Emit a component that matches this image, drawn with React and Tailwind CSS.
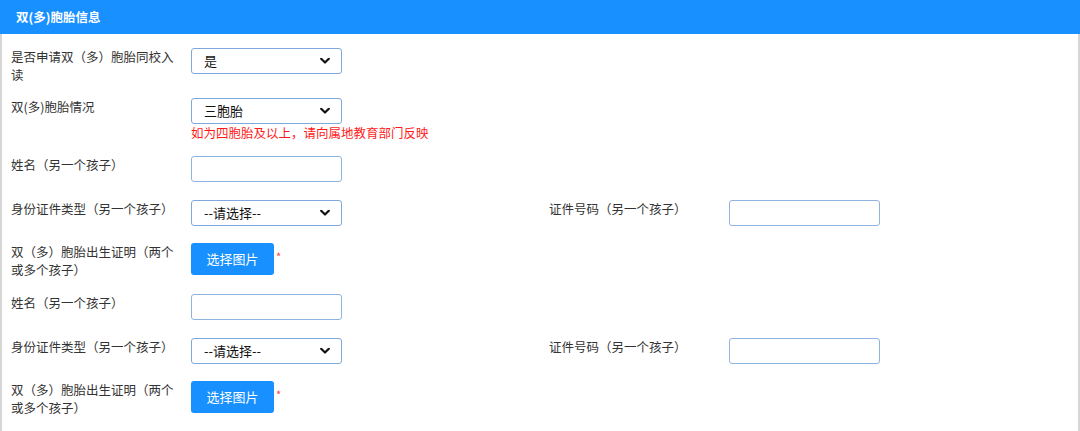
import React from "react";

const FONT = { fontFamily: '"Noto Sans CJK SC", "Noto Sans", sans-serif' };

function Chevron() {
  return (
    <svg width="10" height="7" viewBox="0 0 10 7" className="absolute right-[11px] top-1/2 -translate-y-1/2">
      <path d="M1.2 1.3 L5 5 L8.8 1.3" fill="none" stroke="#111" strokeWidth="2.2" strokeLinecap="round" strokeLinejoin="round" />
    </svg>
  );
}

function Select({ value }) {
  return (
    <div className="relative w-[151px] h-[26px] border border-[#7fa9db] rounded-[3px] bg-white flex items-center pl-[12px] text-[13px] text-[#111]">
      {value}
      <Chevron />
    </div>
  );
}

function Input() {
  return <div className="w-[151px] h-[26px] border border-[#8fb4e0] rounded-[3px] bg-white" />;
}

function UploadButton() {
  return (
    <div className="flex items-start">
      <div className="w-[83px] h-[32px] bg-[#1890ff] rounded-[3px] text-white text-[13px] flex items-center justify-center">
        选择图片
      </div>
      <span className="text-[#ff3b3b] text-[11px] leading-none ml-[2px] mt-[8px]">*</span>
    </div>
  );
}

function Field({ label, children }) {
  return (
    <div className="w-[539px] pl-[9px] flex items-start">
      <div className="w-[170px] mr-[10px] text-[12.5px] leading-[18px] text-[#333]">{label}</div>
      <div>{children}</div>
    </div>
  );
}

export default function App() {
  return (
    <div className="w-[1080px] h-[431px] bg-white overflow-hidden" style={FONT}>
      <div className="h-[34px] bg-[#1890ff] flex items-center pl-[16px] text-white font-bold text-[12.5px]">
        双(多)胞胎信息
      </div>
      <div className="h-[397px] border-l-2 border-r-2 border-[#d6d6d6] pt-[14px]">
        <div className="h-[50px] flex">
          <Field label="是否申请双（多）胞胎同校入读">
            <Select value="是" />
          </Field>
        </div>
        <div className="h-[58px] flex">
          <Field label="双(多)胞胎情况">
            <Select value="三胞胎" />
            <div className="text-[12.5px] leading-[18px] text-[#ff1a1a] whitespace-nowrap">
              如为四胞胎及以上，请向属地教育部门反映
            </div>
          </Field>
        </div>
        <div className="h-[44px] flex">
          <Field label="姓名（另一个孩子）">
            <Input />
          </Field>
        </div>
        <div className="h-[43px] flex">
          <Field label="身份证件类型（另一个孩子）">
            <Select value="--请选择--" />
          </Field>
          <Field label="证件号码（另一个孩子）">
            <Input />
          </Field>
        </div>
        <div className="h-[51px] flex">
          <Field label="双（多）胞胎出生证明（两个或多个孩子）">
            <UploadButton />
          </Field>
        </div>
        <div className="h-[44px] flex">
          <Field label="姓名（另一个孩子）">
            <Input />
          </Field>
        </div>
        <div className="h-[43px] flex">
          <Field label="身份证件类型（另一个孩子）">
            <Select value="--请选择--" />
          </Field>
          <Field label="证件号码（另一个孩子）">
            <Input />
          </Field>
        </div>
        <div className="h-[50px] flex">
          <Field label="双（多）胞胎出生证明（两个或多个孩子）">
            <UploadButton />
          </Field>
        </div>
      </div>
    </div>
  );
}
